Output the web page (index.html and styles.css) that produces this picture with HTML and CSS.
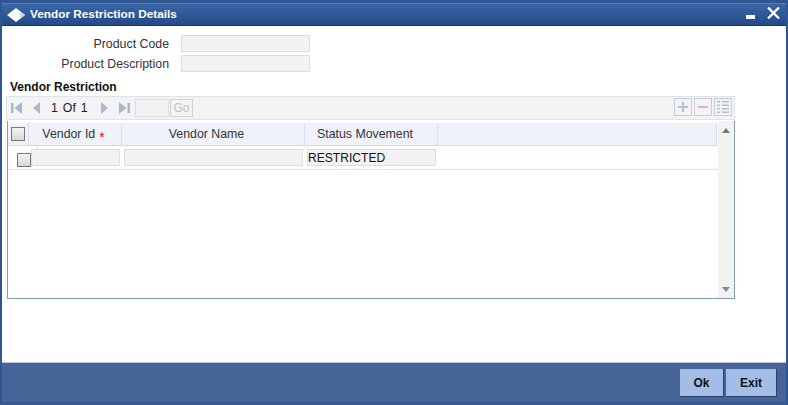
FILE: index.html
```html
<!DOCTYPE html>
<html lang="en">
<head>
  <meta charset="UTF-8" />
  <title>Vendor Restriction Details</title>
  <link rel="stylesheet" href="styles.css">
</head>
<body>
  <div class="window">
    <div class="titlebar">
      <svg class="logo" width="18" height="14" viewBox="0 0 18 14"><path d="M9 0L18 7L9 14L0 7Z" fill="#fff"/><path d="M13 3.100L18 7L13 10.900Z" fill="#cfd8e8"/></svg>
      <span class="title">Vendor Restriction Details</span>
      <svg class="win-min" width="9" height="4" viewBox="0 0 9 4"><rect width="9" height="4" fill="#fff"/></svg>
      <svg class="win-close" width="13" height="12" viewBox="0 0 13 12"><path d="M1 0.500L12 11.500M12 0.500L1 11.500" stroke="#fff" stroke-width="2.300" fill="none"/></svg>
    </div>

    <div class="content">
      <div class="form-row">
        <label>Product Code</label>
        <input type="text" class="field">
      </div>
      <div class="form-row">
        <label>Product Description</label>
        <input type="text" class="field">
      </div>

      <h3>Vendor Restriction</h3>

      <div class="toolbar">
        <div class="pager">
          <svg width="14" height="12" viewBox="0 0 14 12"><path d="M1 1H3.500V11H1ZM12 0V12L4.500 6Z" fill="#a9b7cf"/></svg>
          <svg class="prev" width="9" height="12" viewBox="0 0 9 12"><path d="M8 0V12L1 6Z" fill="#a9b7cf"/></svg>
          <span class="count">1 Of 1</span>
          <svg class="next" width="9" height="12" viewBox="0 0 9 12"><path d="M1 0V12L8 6Z" fill="#a9b7cf"/></svg>
          <svg class="last" width="14" height="12" viewBox="0 0 14 12"><path d="M2 0V12L9.500 6ZM10.500 1H13V11H10.500Z" fill="#a9b7cf"/></svg>
          <input type="text" class="page-input">
          <button class="go">Go</button>
        </div>
        <div class="tools">
          <button class="tool"><svg width="10" height="10" viewBox="0 0 10 10"><path d="M0 4H10V6H0ZM4 0H6V10H4Z" fill="#b3c0d8"/></svg></button>
          <button class="tool"><svg width="10" height="10" viewBox="0 0 10 10"><path d="M0 4H10V6H0Z" fill="#e3b3b3"/></svg></button>
          <button class="tool"><svg width="12" height="12" viewBox="0 0 12 12"><path d="M0 0H3V1.500H0ZM5 0H12V1.500H5ZM0 3.500H3V5H0ZM5 3.500H12V5H5ZM0 7H3V8.500H0ZM5 7H12V8.500H5ZM0 10.500H3V12H0ZM5 10.500H12V12H5Z" fill="#b3c0d8"/></svg></button>
        </div>
      </div>

      <div class="grid">
        <div class="grid-main">
          <div class="grid-head">
            <div class="col col-check"><span class="check"></span></div>
            <div class="col col-id">Vendor Id <span class="req">*</span></div>
            <div class="col col-name">Vendor Name</div>
            <div class="col col-status">Status Movement</div>
            <div class="col col-rest"></div>
          </div>
          <div class="grid-row">
            <span class="check row-check"></span>
            <input type="text" class="cell cell-id">
            <input type="text" class="cell cell-name">
            <input type="text" class="cell cell-status" value="RESTRICTED">
          </div>
        </div>
        <div class="scrollbar">
          <svg width="8" height="5" viewBox="0 0 8 5"><path d="M4 0L8 5H0Z" fill="#777"/></svg>
          <svg width="8" height="5" viewBox="0 0 8 5"><path d="M0 0H8L4 5Z" fill="#888"/></svg>
        </div>
      </div>
    </div>

    <div class="footer">
      <button class="btn">Ok</button>
      <button class="btn btn-exit">Exit</button>
    </div>
  </div>
</body>
</html>
```

FILE: styles.css
```css
* {
  box-sizing: border-box;
}
body {
  margin: 0;
  font-family: "Liberation Sans", Arial, sans-serif;
  font-size: 12.35px;
  color: #333;
  background: #fff;
}
.window {
  width: 788px;
  height: 405px;
  display: flex;
  flex-direction: column;
  background: #466498;
  border-left: 2px solid #2f5592;
  border-right: 2px solid #2f5592;
  border-bottom: 3px solid #38588f;
}
.titlebar {
  height: 26px;
  flex: none;
  display: flex;
  align-items: center;
  padding: 1px 0 0 5px;
  background: linear-gradient(#3a67a8 0, #335f9f 30%, #244a88 100%);
  border-top: 3px solid #2f5592;
  border-bottom: 1px solid #1a335f;
  box-shadow: inset 0 1px #5a7dae;
  color: #fff;
}
.logo {
  flex: none;
}
.title {
  margin: -2px 0 0 5px;
  font-weight: bold;
  font-size: 11.8px;
}
.win-min {
  margin-left: auto;
  margin-top: 4px;
}
.win-close {
  margin: -4px 6px 0 12px;
}
.content {
  flex: 1;
  background: #fff;
  padding: 9px 0 0 4px;
  border-bottom: 1px solid #b9c8dc;
}
.form-row {
  display: flex;
  align-items: center;
  height: 17px;
  margin-bottom: 3px;
}
.form-row label {
  width: 163px;
  text-align: right;
}
.field {
  width: 129px;
  height: 17px;
  margin-left: 12px;
  background: #f2f2f2;
  border: 1px solid #dedede;
}
h3 {
  margin: 8px 0 1px 4px;
  font-size: 12px;
  line-height: 15px;
  color: #111;
}
.toolbar {
  width: 729px;
  height: 24px;
  display: flex;
  justify-content: space-between;
  align-items: center;
  background: #f3f3f3;
  border: 1px solid #dfe3ea;
  padding: 0 2px 1px 3px;
}
.pager {
  display: flex;
  align-items: center;
}
.prev {
  margin-left: 8px;
}
.count {
  width: 38px;
  margin: 1px 0 0 10px;
  color: #222;
  word-spacing: 1.500px;
}
.next {
  margin-left: 11px;
}
.last {
  margin-left: 8px;
}
.page-input {
  width: 34px;
  height: 18px;
  margin-left: 4px;
  background: #f2f2f2;
  border: 1px solid #dedede;
}
.go {
  width: 23px;
  height: 18px;
  margin-left: 1px;
  padding: 0;
  font: 12px "Liberation Sans", Arial, sans-serif;
  color: #c4c4c4;
  background: #f3f3f3;
  border: 1px solid #d0d0d0;
}
.tools {
  display: flex;
  gap: 2px;
  margin-top: -1px;
}
.tool {
  width: 18px;
  height: 18px;
  padding: 0;
  display: flex;
  align-items: center;
  justify-content: center;
  background: #f3f3f3;
  border: 1px solid #c8ced6;
}
.grid {
  width: 728px;
  height: 178px;
  margin: 1px 0 0 1px;
  display: flex;
  background: #fff;
  border: 1px solid #7f9db9;
  border-top: none;
}
.grid-main {
  flex: 1;
  padding-top: 2px;
}
.grid-head {
  height: 23px;
  display: flex;
  margin-right: 1px;
  background: #eff2fb;
  border-bottom: 1px solid #cfd8e6;
  border-right: 1px solid #cfd8e6;
}
.col {
  display: flex;
  align-items: center;
  justify-content: center;
  border-right: 1px solid #d7deec;
}
.col-check {
  width: 21px;
}
.col-id {
  width: 93px;
  gap: 4px;
  padding-right: 3px;
}
.col-name {
  width: 183px;
  padding-right: 13px;
}
.col-status {
  width: 133px;
  padding-right: 12px;
}
.col-rest {
  flex: 1;
  border-right: none;
}
.req {
  color: #d01818;
  font-size: 14px;
  line-height: 10px;
  margin-top: 5px;
}
.check {
  display: block;
  flex: none;
  width: 14px;
  height: 14px;
  background: linear-gradient(#f3f3f3, #d6d6d6);
  border: 1px solid #777;
}
.grid-row {
  height: 24px;
  display: flex;
  align-items: flex-start;
  padding-top: 3px;
  border-bottom: 1px solid #dde3ec;
  background: linear-gradient(#e4e9f2, #e4e9f2) 29px 0 / 1px 100% no-repeat;
}
.row-check {
  margin: 4px 0 0 9px;
}
.cell {
  height: 17px;
  padding: 0;
  background: #f2f2f2;
  border: 1px solid #dedede;
  font: 12.1px "Liberation Sans", Arial, sans-serif;
  color: #111;
}
.cell-id {
  width: 89px;
}
.cell-name {
  width: 179px;
  margin-left: 4px;
}
.cell-status {
  width: 129px;
  margin-left: 4px;
}
.scrollbar {
  width: 16px;
  flex: none;
  display: flex;
  flex-direction: column;
  justify-content: space-between;
  align-items: center;
  padding: 7px 0 6px;
  background: #f2f2f2;
}
.footer {
  height: 39px;
  flex: none;
  display: flex;
  justify-content: flex-end;
  gap: 2px;
  padding: 6px 9px 0 0;
}
.btn {
  width: 44px;
  height: 28px;
  padding: 0;
  font: bold 12px "Liberation Sans", Arial, sans-serif;
  color: #111;
  background: #a2bee6;
  border: none;
  border-right: 1px solid #2b3f66;
  border-bottom: 1px solid #2b3f66;
}
.btn-exit {
  width: 51px;
}
```
